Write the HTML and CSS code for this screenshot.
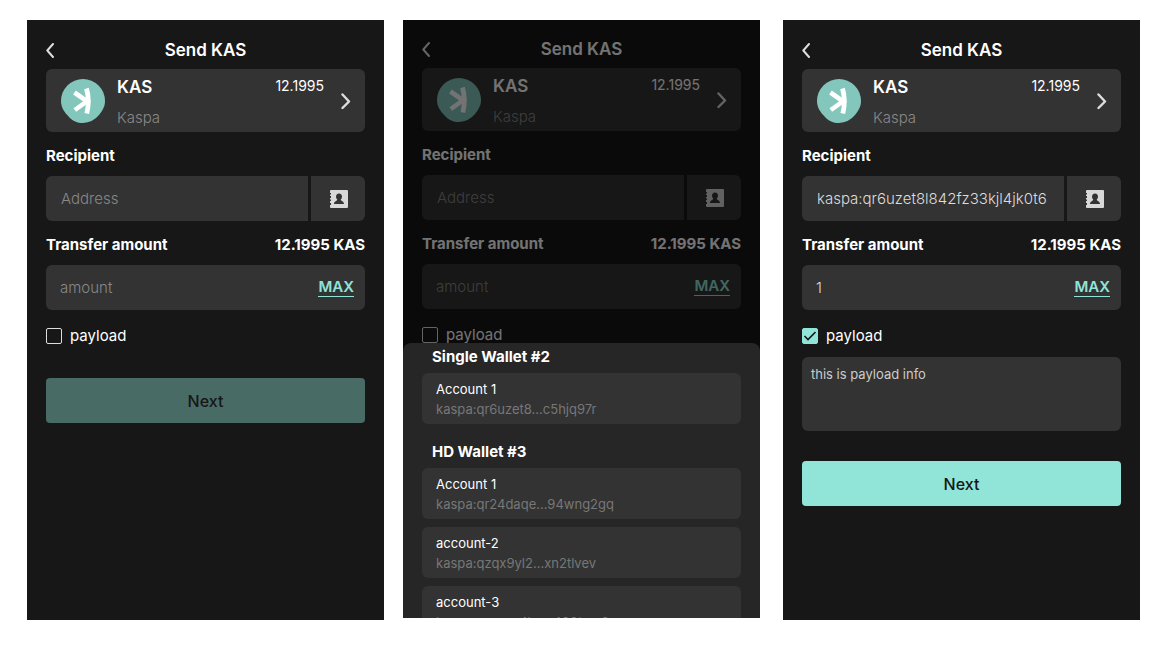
FILE: index.html
```html
<!DOCTYPE html>
<html lang="en">
<head>
    <meta charset="UTF-8">
    <meta name="viewport" content="width=device-width, initial-scale=1.0">
    <title>Send KAS</title>
    <link rel="stylesheet" href="styles.css">
</head>
<body>

    <svg class="sprite" aria-hidden="true">
        <symbol id="icon-back" viewBox="0 0 10 16">
            <path d="M7 2 L1.300 8.500 L7 15" fill="none" stroke="#ddd" stroke-width="2" stroke-linecap="round" stroke-linejoin="round"/>
        </symbol>
        <symbol id="icon-forward" viewBox="0 0 10 18">
            <path d="M1.500 2.500 L8 9.500 L1.500 16" fill="none" stroke="#ddd" stroke-width="2.4" stroke-linecap="round" stroke-linejoin="round"/>
        </symbol>
        <symbol id="icon-kaspa" viewBox="0 0 44 44">
            <path d="M22 0 A22 22 0 0 1 44 22 C44 28 41 32 38 36 A22 22 0 0 1 22 44 C16 44 12 42 8 38 C3 33 0 28 0 22 A22 22 0 0 1 22 0 Z" fill="#83c7bc"/>
            <path d="M25.500 9.500 Q29 22 25.800 34.500" fill="none" stroke="#fff" stroke-width="4.800"/>
            <path d="M13.500 13.500 L26 22.300 L13.800 31" fill="none" stroke="#fff" stroke-width="4.600"/>
        </symbol>
        <symbol id="icon-contacts" viewBox="0 0 18 18">
            <path d="M1 0 H17 Q18 0 18 1 V17 Q18 18 17 18 H1 Q0 18 0 17 V15 H1 V13 H0 V11 H1 V9.500 H0 V8 H1 V6 H0 V4.500 H1 V3 H0 V1 Q0 0 1 0 Z" fill="#d8d8d8"/>
            <path d="M9 3.500 C11 3.500 12 5 12 6.500 C12 8 11.300 9 10.700 9.700 C10.700 10.700 14 11 14 14 H4 C4 11 7.300 10.700 7.300 9.700 C6.700 9 6 8 6 6.500 C6 5 7 3.500 9 3.500 Z" fill="#333"/>
        </symbol>
    </svg>

    <main class="screens">

        <!-- Empty form -->
        <section class="screen">
            <header class="topbar">
                <button class="back" aria-label="Back"><svg width="10" height="16"><use href="#icon-back"/></svg></button>
                <h1>Send KAS</h1>
            </header>
            <button class="token">
                <svg class="token-logo" width="44" height="44"><use href="#icon-kaspa"/></svg>
                <span class="token-name"><strong>KAS</strong><small>Kaspa</small></span>
                <span class="token-balance">12.1995</span>
                <svg width="10" height="18"><use href="#icon-forward"/></svg>
            </button>
            <div class="label-row"><label for="address1">Recipient</label></div>
            <div class="address-row">
                <input class="field" type="text" id="address1" placeholder="Address">
                <button class="contacts" aria-label="Address book"><svg width="18" height="18"><use href="#icon-contacts"/></svg></button>
            </div>
            <div class="label-row"><label for="amount1">Transfer amount</label><span>12.1995 KAS</span></div>
            <div class="field amount">
                <input type="text" id="amount1" placeholder="amount">
                <button class="max">MAX</button>
            </div>
            <label class="check"><input type="checkbox">payload</label>
            <button class="next" disabled>Next</button>
        </section>

        <!-- Account picker open -->
        <section class="screen picker">
            <header class="topbar">
                <button class="back" aria-label="Back"><svg width="10" height="16"><use href="#icon-back"/></svg></button>
                <h1>Send KAS</h1>
            </header>
            <button class="token">
                <svg class="token-logo" width="44" height="44"><use href="#icon-kaspa"/></svg>
                <span class="token-name"><strong>KAS</strong><small>Kaspa</small></span>
                <span class="token-balance">12.1995</span>
                <svg width="10" height="18"><use href="#icon-forward"/></svg>
            </button>
            <div class="label-row"><label for="address2">Recipient</label></div>
            <div class="address-row">
                <input class="field" type="text" id="address2" placeholder="Address">
                <button class="contacts" aria-label="Address book"><svg width="18" height="18"><use href="#icon-contacts"/></svg></button>
            </div>
            <div class="label-row"><label for="amount2">Transfer amount</label><span>12.1995 KAS</span></div>
            <div class="field amount">
                <input type="text" id="amount2" placeholder="amount">
                <button class="max">MAX</button>
            </div>
            <label class="check"><input type="checkbox">payload</label>

            <div class="overlay"></div>
            <div class="sheet">
                <h2>Single Wallet #2</h2>
                <button class="account"><span>Account 1</span><small>kaspa:qr6uzet8...c5hjq97r</small></button>
                <h2>HD Wallet #3</h2>
                <button class="account"><span>Account 1</span><small>kaspa:qr24daqe...94wng2gq</small></button>
                <button class="account"><span>account-2</span><small>kaspa:qzqx9yl2...xn2tlvev</small></button>
                <button class="account"><span>account-3</span><small>kaspa:qzrgyu4k...a490tme9</small></button>
            </div>
        </section>

        <!-- Filled form -->
        <section class="screen">
            <header class="topbar">
                <button class="back" aria-label="Back"><svg width="10" height="16"><use href="#icon-back"/></svg></button>
                <h1>Send KAS</h1>
            </header>
            <button class="token">
                <svg class="token-logo" width="44" height="44"><use href="#icon-kaspa"/></svg>
                <span class="token-name"><strong>KAS</strong><small>Kaspa</small></span>
                <span class="token-balance">12.1995</span>
                <svg width="10" height="18"><use href="#icon-forward"/></svg>
            </button>
            <div class="label-row"><label for="address3">Recipient</label></div>
            <div class="address-row">
                <input class="field" type="text" id="address3" value="kaspa:qr6uzet8l842fz33kjl4jk0t6">
                <button class="contacts" aria-label="Address book"><svg width="18" height="18"><use href="#icon-contacts"/></svg></button>
            </div>
            <div class="label-row"><label for="amount3">Transfer amount</label><span>12.1995 KAS</span></div>
            <div class="field amount">
                <input type="text" id="amount3" value="1">
                <button class="max">MAX</button>
            </div>
            <label class="check"><input type="checkbox" checked>payload</label>
            <textarea class="payload" aria-label="Payload">this is payload info</textarea>
            <button class="next">Next</button>
        </section>

    </main>

</body>
</html>
```
FILE: styles.css
```css
* {
    box-sizing: border-box;
}
body {
    margin: 0;
    font-family: Inter, sans-serif;
    font-size: 15px;
    background-color: #fff;
    color: #fff;
}
button, input, textarea {
    font: inherit;
    color: inherit;
    margin: 0;
    padding: 0;
    border: none;
    background: none;
    outline: none;
}
button {
    cursor: pointer;
}
.sprite {
    display: none;
}
.screens {
    display: flex;
    min-height: 100vh;
    padding: 20px 25px 39px 27px;
}
.screen {
    flex: 1;
    min-width: 0;
    display: flex;
    flex-direction: column;
    padding: 0 19px;
    background-color: #171717;
}
.picker {
    position: relative;
    overflow: hidden;
    margin: 0 23px 2px 19px;
}

/* Header */
.topbar {
    display: grid;
    grid-template-columns: 10px 1fr 10px;
    align-items: center;
    height: 49px;
    padding-top: 10px;
}
.picker .topbar {
    height: 48px;
}
.back {
    display: flex;
}
.topbar h1 {
    margin: 0;
    font-size: 17px;
    font-weight: 600;
    line-height: 20px;
    text-align: center;
}

/* Token card */
.token {
    display: flex;
    align-items: center;
    height: 63px;
    padding: 0 14px 0 15px;
    border-radius: 6px;
    background-color: #333;
    text-align: left;
}
.token-name {
    display: flex;
    flex-direction: column;
    flex: 1;
    gap: 11px;
    margin-left: 12px;
    padding-top: 3px;
    line-height: 20px;
}
.token-name strong {
    font-size: 17px;
    font-weight: 600;
}
.token-name small {
    font-size: 15px;
    font-weight: 300;
    color: #888;
}
.token-balance {
    align-self: flex-start;
    margin: 7px 17px 0 0;
    font-size: 14px;
    line-height: 20px;
}

/* Form */
.label-row {
    display: flex;
    justify-content: space-between;
    padding: 14px 0 10px;
    font-weight: 700;
    line-height: 20px;
}
.address-row {
    display: flex;
    gap: 3px;
}
.field {
    flex: 1;
    min-width: 0;
    height: 45px;
    padding: 0 15px;
    border-radius: 6px;
    background-color: #333;
    color: #ddd;
    font-weight: 300;
}
.address-row .field {
    border-radius: 6px 0 0 6px;
}
.contacts {
    display: grid;
    place-items: center;
    width: 54px;
    padding-left: 2px;
    border-radius: 0 6px 6px 0;
    background-color: #333;
}
::placeholder {
    color: #888;
    opacity: 1;
}
.amount {
    display: flex;
    flex: none;
    align-items: center;
    padding: 0 11px 0 14px;
}
.amount input {
    flex: 1;
    min-width: 0;
}
.max {
    border-bottom: 1px solid #91e4d8;
    color: #91e4d8;
    font-weight: 600;
    line-height: 18px;
}
.check {
    display: flex;
    align-items: center;
    gap: 8px;
    padding: 16px 0 11px;
    font-size: 15px;
    line-height: 20px;
}
.check input {
    appearance: none;
    width: 16px;
    height: 16px;
    border: 1px solid #ddd;
    border-radius: 2px;
}
.check input:checked {
    border-color: #91e4d8;
    background: #91e4d8 url("data:image/svg+xml,%3Csvg xmlns='http://www.w3.org/2000/svg' viewBox='0 0 14 14'%3E%3Cpath d='M1.500 7 L5 10.500 L12.500 3' fill='none' stroke='%23171717' stroke-width='1.600'/%3E%3C/svg%3E") center / 14px no-repeat;
}
.payload {
    height: 74px;
    padding: 8px 9px;
    border-radius: 6px;
    background-color: #333;
    color: #ccc;
    font-size: 13px;
    line-height: 18px;
    resize: none;
}
.next {
    height: 45px;
    margin-top: 21px;
    border-radius: 4px;
    background-color: #91e4d8;
    color: #171717;
    font-size: 16px;
    font-weight: 500;
}
.next:disabled {
    background-color: #496b65;
}
.payload + .next {
    margin-top: 30px;
}

/* Bottom sheet */
.overlay {
    position: absolute;
    inset: 0;
    background-color: rgba(0, 0, 0, 0.55);
}
.sheet {
    position: absolute;
    left: 0;
    right: 0;
    bottom: 0;
    height: 46%;
    display: flex;
    flex-direction: column;
    gap: 8px;
    padding: 4px 19px 0;
    border-radius: 8px 8px 0 0;
    background-color: #262626;
    overflow: hidden;
}
.sheet h2 {
    margin: 0 10px -2px;
    font-size: 15px;
    font-weight: 700;
    line-height: 20px;
}
.account + h2 {
    margin-top: 10px;
}
.account {
    display: flex;
    flex: none;
    flex-direction: column;
    padding: 6px 14px 5px;
    border-radius: 6px;
    background-color: #333;
    text-align: left;
    font-size: 13px;
    line-height: 20px;
}
.account small {
    font-size: 13px;
    color: #777;
}
```
